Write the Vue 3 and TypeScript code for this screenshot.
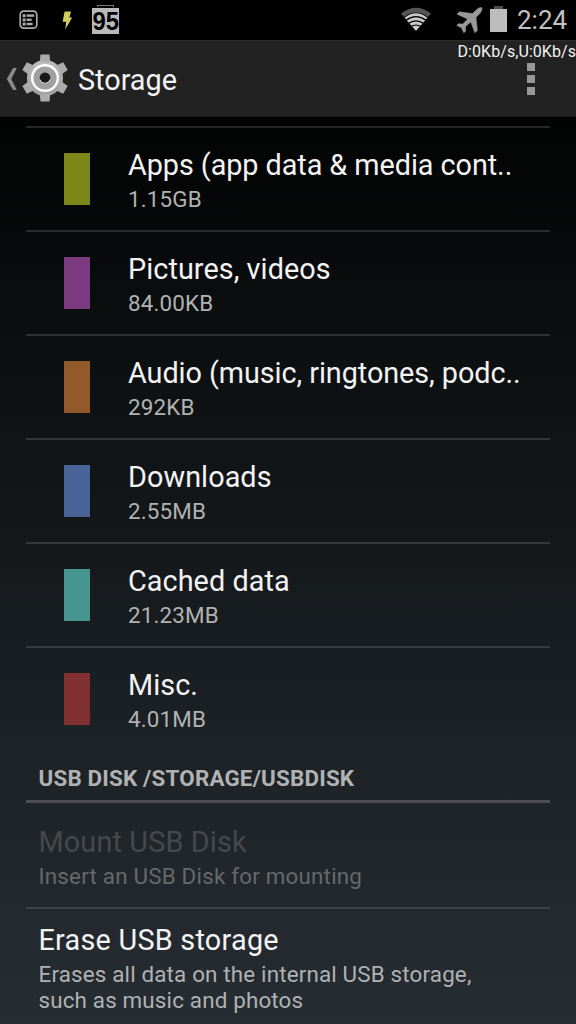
<script setup lang="ts">
interface StorageItem {
  title: string
  size: string
  kind: string
}

const items: StorageItem[] = [
  { title: 'Apps (app data & media cont..', size: '1.15GB', kind: 'apps' },
  { title: 'Pictures, videos', size: '84.00KB', kind: 'pictures' },
  { title: 'Audio (music, ringtones, podc..', size: '292KB', kind: 'audio' },
  { title: 'Downloads', size: '2.55MB', kind: 'downloads' },
  { title: 'Cached data', size: '21.23MB', kind: 'cached' },
  { title: 'Misc.', size: '4.01MB', kind: 'misc' },
]

const teeth: number[] = [0, 60, 120, 180, 240, 300]
</script>

<template>
  <div class="screen">
    <header class="status">
      <svg class="log" width="20" height="20" viewBox="0 0 20 20">
        <rect x="1.2" y="1.2" width="16.6" height="17" rx="3.5" fill="none" stroke="#a9a9a9" stroke-width="1.7" />
        <g fill="#a9a9a9">
          <rect x="3.6" y="4.2" width="3" height="3" /><rect x="7.6" y="4.4" width="7.6" height="2.4" />
          <rect x="3.6" y="8.4" width="3" height="3" /><rect x="7.6" y="8.6" width="5" height="2.4" />
          <rect x="3.6" y="12.6" width="3" height="3" /><rect x="7.6" y="12.8" width="6" height="2.4" />
        </g>
      </svg>
      <svg class="bolt" width="11" height="19" viewBox="0 0 11 19">
        <path d="M2.6 .4 H9 L7.4 6.4 H10.2 L3.2 18.4 L4.2 10.8 H.6 Z" fill="#d0cf5c" />
      </svg>
      <div class="level"><i class="level-cap"></i><span class="level-num">95</span></div>
      <div class="status-right">
        <svg class="wifi" width="32" height="25" viewBox="0 0 32 25">
          <path d="M1 6.5 Q16 -5 31 6.5 L28 10 Q16 1.2 4 10 Z" fill="#555" />
          <path d="M4.6 10.7 Q16 2 27.4 10.7 L16 24 Z" fill="#c9c9c9" />
          <g fill="none" stroke="#000" stroke-width="1.2">
            <path d="M6 13.3 Q16 6 26 13.3" />
            <path d="M8 16.8 Q16 11 24 16.8" />
            <path d="M10.5 20 Q16 16 21.5 20" />
          </g>
        </svg>
        <svg class="plane" width="27" height="27" viewBox="0 0 27 27">
          <path d="M25.8 .6 C24.6 0 22.4 1 20.8 2.6 L16.4 6.6 L3.4 4.8 L1 7.2 L11.6 12 L6.8 17 L2.2 16.8 L.8 18.4 L5.4 20.8 L7.8 25.8 L9.6 24.2 L9.6 19.6 L14.8 15 L18.8 25.8 L21.4 23.4 L20 10.4 L24 6.2 C25.6 4.4 26.6 1.8 25.8 .6 Z" fill="#999" stroke="#999" stroke-width=".5" stroke-linejoin="round" />
        </svg>
        <svg class="battery" width="17" height="26" viewBox="0 0 17 26">
          <rect x="4" y="0" width="9" height="3" fill="#4d4d4d" />
          <rect x="0" y="3" width="17" height="23" fill="#bdbdbd" />
        </svg>
        <span class="clock">2:24</span>
      </div>
    </header>

    <div class="bar">
      <svg class="back" width="12" height="24" viewBox="0 0 12 24">
        <path d="M7.1 1 H10.8 L5.3 12 L10.8 23 H7.1 L0.8 12 Z" fill="#8b8b8b" />
      </svg>
      <svg class="gear" width="48" height="50" viewBox="-24 -25 48 50">
        <defs>
          <linearGradient id="metal" x1="0" y1="-24" x2="0" y2="24" gradientUnits="userSpaceOnUse">
            <stop offset="0" stop-color="#c4c4c4" />
            <stop offset="1" stop-color="#999" />
          </linearGradient>
        </defs>
        <circle r="18" fill="url(#metal)" />
        <path v-for="a in teeth" :key="a" d="M-5.2 -16 L-4.5 -23.6 H4.5 L5.2 -16 Z" :transform="`rotate(${a})`" fill="#acacac" />
        <circle r="12.8" fill="#a0a0a0" stroke="#fff" stroke-width="2.4" />
        <circle r="5.4" fill="#181818" />
        <path d="M-5.2 1.4 A5.4 5.4 0 0 0 5.2 1.4" fill="none" stroke="#ddd" stroke-width="1" />
      </svg>
      <h1 class="heading">Storage</h1>
      <div class="overflow"><i class="dot"></i><i class="dot"></i><i class="dot"></i></div>
      <div class="net">D:0Kb/s,U:0Kb/s</div>
    </div>

    <main class="list">
      <div v-for="item in items" :key="item.kind" class="row">
        <i class="swatch" :class="item.kind"></i>
        <div class="texts">
          <div class="title" :class="{ tight: item.title.length > 20 }">{{ item.title }}</div>
          <div class="summary">{{ item.size }}</div>
        </div>
      </div>
      <h2 class="section">USB DISK /STORAGE/USBDISK</h2>
      <div class="entry disabled">
        <div class="title">Mount USB Disk</div>
        <div class="summary">Insert an USB Disk for mounting</div>
      </div>
      <div class="entry last">
        <div class="title">Erase USB storage</div>
        <div class="summary">Erases all data on the internal USB storage,<br>such as music and photos</div>
      </div>
    </main>
  </div>
</template>

<style>
body { margin: 0; background: #000; }
</style>

<style scoped>
.screen {
  width: 576px;
  height: 1024px;
  overflow: hidden;
  box-sizing: border-box;
  display: flex;
  flex-direction: column;
  font-family: Roboto, "Noto Sans", sans-serif;
  color: #f3f3f3;
  background: linear-gradient(#020303 0, #020303 120px, #0c0f10 340px, #15191c 560px, #1f2428 800px, #262d33 1024px);
}
.status {
  flex: none;
  height: 40px;
  background: #000;
  display: flex;
  align-items: flex-start;
}
.log { margin: 10px 0 0 19px; }
.bolt { margin: 11px 0 0 23px; }
.level {
  position: relative;
  margin: 8px 0 0 19px;
  width: 27px;
  height: 26px;
  background: #bababa;
  display: flex;
  align-items: center;
  justify-content: center;
}
.level-cap {
  position: absolute;
  left: 5px;
  top: -3px;
  width: 17px;
  height: 2px;
  border: 1px solid #777;
  border-bottom: 0;
  box-sizing: border-box;
}
.level-num {
  font: bold 26.5px/26px "Liberation Sans", Arial, sans-serif;
  color: #000;
  transform: scaleX(.9);
}
.status-right {
  margin-left: auto;
  display: flex;
  align-items: flex-start;
}
.wifi { margin: 7px 24px 0 0; }
.plane { margin: 7px 7px 0 0; }
.battery { margin: 6px 10px 0 0; }
.clock {
  width: 59px;
  font-size: 26px;
  line-height: 41px;
  color: #c2c2c2;
  white-space: nowrap;
}
.bar {
  position: relative;
  flex: none;
  height: 77px;
  box-sizing: border-box;
  background: #222;
  border-top: 1px solid #2d2d2d;
  border-bottom: 1px solid #171717;
  display: flex;
  align-items: center;
}
.back { margin: 0 3px 0 6px; }
.gear { margin-top: -1px; }
.heading {
  margin: 2px 0 0 9px;
  font-size: 28.8px;
  line-height: 34px;
  font-weight: 400;
}
.overflow {
  margin: 0 41px 0 auto;
  display: flex;
  flex-direction: column;
  gap: 4px;
}
.dot {
  width: 8px;
  height: 8px;
  background: #979797;
}
.net {
  position: absolute;
  right: 0;
  top: 1px;
  font-size: 16px;
  line-height: 20px;
  letter-spacing: .06px;
  white-space: nowrap;
}
.list {
  flex: none;
  padding: 9px 26px 0;
}
.row {
  height: 104px;
  box-sizing: border-box;
  border-top: 2px solid rgba(255, 255, 255, .14);
  padding: 0 0 0 38px;
  display: flex;
  align-items: center;
}
.swatch {
  flex: none;
  width: 26px;
  height: 52px;
  margin-right: 38px;
}
.texts { padding-top: 2px; }
.apps { background: #7c8717; }
.pictures { background: #7c3b80; }
.audio { background: #925a2b; }
.downloads { background: #486496; }
.cached { background: #469590; }
.misc { background: #813030; }
.title {
  font-size: 28.8px;
  line-height: 34px;
  letter-spacing: .06px;
  white-space: nowrap;
}
.title.tight { letter-spacing: -.06px; }
.summary {
  font-size: 22.4px;
  line-height: 26px;
  margin-top: 4px;
  letter-spacing: .16px;
  color: #b0b2b3;
  white-space: nowrap;
}
.section {
  height: 53px;
  box-sizing: border-box;
  margin: 0;
  padding: 15px 0 0 12.5px;
  border-bottom: 3px solid #4c4e52;
  font-size: 22.4px;
  line-height: 26px;
  font-weight: 700;
  letter-spacing: .17px;
  color: #b0b2b3;
  white-space: nowrap;
}
.entry {
  padding: 22px 0 0 12.5px;
}
.disabled {
  height: 106px;
  box-sizing: border-box;
  border-bottom: 2px solid rgba(255, 255, 255, .13);
}
.disabled .title { color: #46494b; letter-spacing: .15px; }
.disabled .summary { color: #66696c; letter-spacing: .2px; }
.last { padding-top: 14px; }
.last .title { letter-spacing: .25px; }
</style>
